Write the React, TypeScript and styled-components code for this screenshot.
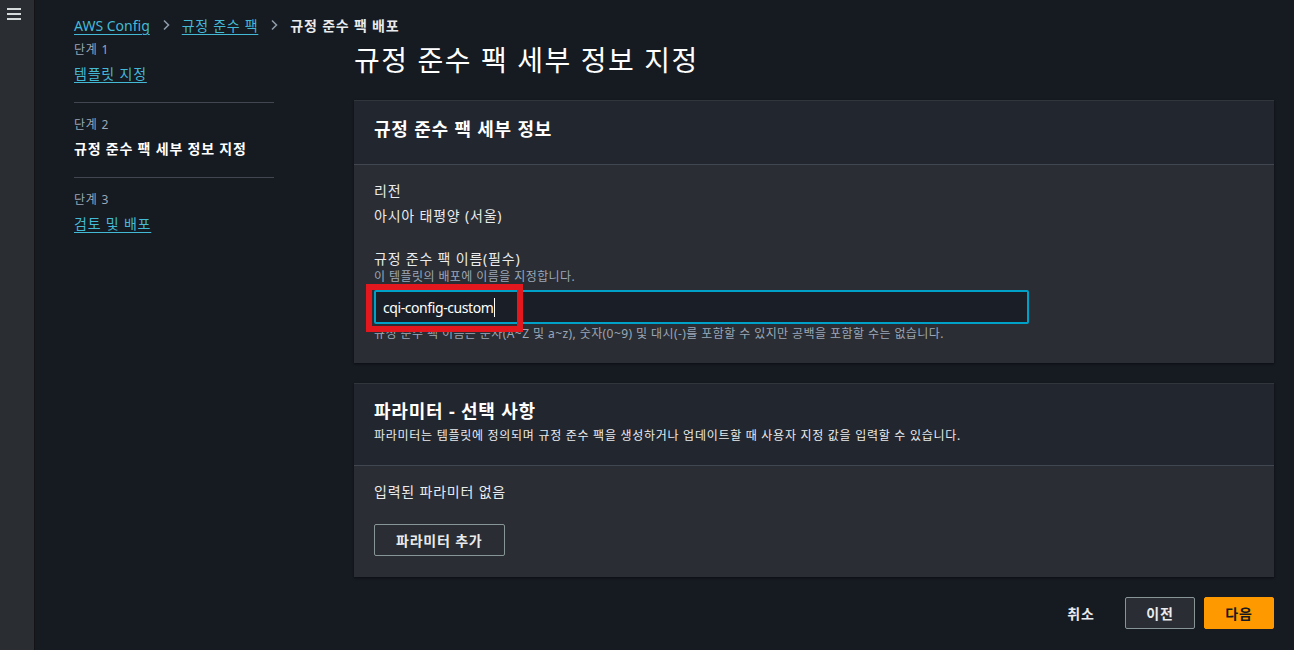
import React from "react";
import styled, { createGlobalStyle } from "styled-components";

const Global = createGlobalStyle`
  html, body, #root { margin: 0; padding: 0; height: 100%; }
  body {
    background: #161a21;
    font-family: "Noto Sans", "Noto Sans CJK KR", sans-serif;
    color: #e9ebed;
    letter-spacing: 0.05em;
    -webkit-font-smoothing: antialiased;
  }
  button { letter-spacing: inherit; }
  * { box-sizing: border-box; }
`;

const Shell = styled.div`
  display: flex;
  min-height: 100vh;
`;

const SideRail = styled.aside`
  width: 35px;
  flex: none;
  background: #2a2e33;
  border-right: 1px solid #121418;
  padding: 8px 0 0 7px;
`;

const MenuButton = styled.button`
  display: flex;
  flex-direction: column;
  gap: 3px;
  width: 14px;
  padding: 0;
  border: 0;
  background: none;
  cursor: pointer;
  span {
    display: block;
    height: 2px;
    background: #d5dbdb;
  }
`;

const Main = styled.main`
  flex: 1;
  padding: 14px 20px 20px 39px;
`;

const Breadcrumbs = styled.nav`
  display: flex;
  align-items: center;
  height: 22px;
  font-size: 14px;
  gap: 10px;
`;

const Crumb = styled.a<{ $latin?: boolean }>`
  color: #44b9d6;
  text-decoration: underline;
  text-underline-offset: 3px;
  text-decoration-thickness: 1px;
  letter-spacing: ${(p) => (p.$latin ? "0" : "0.05em")};
`;

const CrumbCurrent = styled.span`
  color: #e9ebed;
  font-weight: 700;
`;

const Chevron = styled.svg`
  width: 12px;
  height: 12px;
  color: #8d99a8;
`;

const Body = styled.div`
  display: grid;
  grid-template-columns: 200px 1fr;
  column-gap: 80px;
  margin-top: 6px;
`;

const Steps = styled.ol`
  list-style: none;
  margin: 0;
  padding: 0;
`;

const Step = styled.li`
  display: flex;
  flex-direction: column;
  gap: 6px;
  padding: 14px 0 18px;
  border-bottom: 1px solid #414750;
  &:first-child { padding-top: 0; }
  &:last-child { border-bottom: 0; }
`;

const StepLabel = styled.span`
  font-size: 12px;
  line-height: 16px;
  color: #9ba7b6;
`;

const StepLink = styled.a`
  font-size: 14px;
  line-height: 20px;
  color: #44b9d6;
  text-decoration: underline;
  text-underline-offset: 3px;
  align-self: flex-start;
`;

const StepCurrent = styled.span`
  font-size: 14px;
  line-height: 20px;
  font-weight: 700;
  color: #ffffff;
`;

const Column = styled.div`
  display: flex;
  flex-direction: column;
`;

const PageTitle = styled.h1`
  margin: 0 0 22px;
  font-size: 28px;
  line-height: 36px;
  font-weight: 400;
  letter-spacing: 0.056em;
  color: #ffffff;
`;

const Panel = styled.section`
  background: #2a2d33;
  box-shadow: 0 1px 2px rgba(0, 0, 0, 0.5);
  margin-bottom: 20px;
`;

const PanelHeader = styled.header<{ $tight?: boolean }>`
  background: #22262e;
  border-top: 1px solid #31353c;
  border-bottom: 1px solid #414750;
  padding: ${(p) => (p.$tight ? "15px 20px 21px" : "16px 20px 23px")};
`;

const PanelTitle = styled.h2`
  margin: 0;
  font-size: 18px;
  line-height: 24px;
  font-weight: 700;
  color: #ffffff;
`;

const PanelDesc = styled.p`
  margin: 5px 0 0;
  font-size: 12px;
  line-height: 16px;
  letter-spacing: 0.06em;
  color: #e9ebed;
`;

const PanelBody = styled.div`
  padding: 16px 20px 21px;
  display: flex;
  flex-direction: column;
`;

const FieldLabel = styled.div`
  font-size: 14px;
  line-height: 20px;
  color: #e9ebed;
`;

const FieldValue = styled.div`
  font-size: 14px;
  line-height: 20px;
  color: #e9ebed;
  margin-top: 5px;
  margin-bottom: 23px;
`;

const FieldDesc = styled.div`
  font-size: 12px;
  line-height: 16px;
  letter-spacing: 0.035em;
  color: #9ba7b6;
`;

const InputWrap = styled.div`
  position: relative;
  width: 655px;
  margin: 5px 0 2px;
`;

const TextBox = styled.div`
  height: 34px;
  border: 2px solid #00a1c9;
  border-radius: 2px;
  background: #1a1f27;
  padding: 0 7px;
  display: flex;
  align-items: center;
  font-size: 14px;
  letter-spacing: -0.03em;
  color: #ffffff;
`;

const Caret = styled.span`
  display: inline-block;
  width: 1px;
  height: 19px;
  background: #ffffff;
  margin-left: 1px;
`;

const Annotation = styled.div`
  position: absolute;
  left: -8px;
  top: -6px;
  width: 157px;
  height: 48px;
  border: 6px solid #e3171e;
  pointer-events: none;
`;

const EmptyText = styled.div`
  font-size: 14px;
  line-height: 20px;
  color: #e9ebed;
  margin-bottom: 22px;
`;

const NormalButton = styled.button`
  align-self: flex-start;
  height: 32px;
  padding: 0 21px;
  border: 1px solid #879596;
  border-radius: 2px;
  background: #2a2d33;
  color: #e9ebed;
  font-family: inherit;
  font-size: 14px;
  font-weight: 700;
  cursor: pointer;
`;

const Actions = styled.div`
  display: flex;
  justify-content: flex-end;
  gap: 9px;
`;

const ActionButton = styled.button<{ $kind: "link" | "normal" | "primary" }>`
  height: 32px;
  min-width: 70px;
  padding: 0 20px;
  border-radius: 2px;
  font-family: inherit;
  font-size: 14px;
  font-weight: 700;
  cursor: pointer;
  border: 1px solid
    ${(p) => (p.$kind === "normal" ? "#879596" : p.$kind === "primary" ? "#ff9900" : "transparent")};
  background: ${(p) => (p.$kind === "primary" ? "#ff9900" : p.$kind === "normal" ? "#2a2d33" : "transparent")};
  color: ${(p) => (p.$kind === "primary" ? "#16191f" : "#e9ebed")};
`;

const ChevronIcon = () => (
  <Chevron viewBox="0 0 12 12" fill="none">
    <path d="M4 1.5 8.5 6 4 10.5" stroke="currentColor" strokeWidth="1.6" />
  </Chevron>
);

export default function App() {
  return (
    <>
      <Global />
      <Shell>
        <SideRail>
          <MenuButton aria-label="메뉴">
            <span />
            <span />
            <span />
          </MenuButton>
        </SideRail>
        <Main>
          <Breadcrumbs>
            <Crumb href="#" $latin>
              AWS Config
            </Crumb>
            <ChevronIcon />
            <Crumb href="#">규정 준수 팩</Crumb>
            <ChevronIcon />
            <CrumbCurrent>규정 준수 팩 배포</CrumbCurrent>
          </Breadcrumbs>
          <Body>
            <Steps>
              <Step>
                <StepLabel>단계 1</StepLabel>
                <StepLink href="#">템플릿 지정</StepLink>
              </Step>
              <Step>
                <StepLabel>단계 2</StepLabel>
                <StepCurrent>규정 준수 팩 세부 정보 지정</StepCurrent>
              </Step>
              <Step>
                <StepLabel>단계 3</StepLabel>
                <StepLink href="#">검토 및 배포</StepLink>
              </Step>
            </Steps>
            <Column>
              <PageTitle>규정 준수 팩 세부 정보 지정</PageTitle>
              <Panel>
                <PanelHeader>
                  <PanelTitle>규정 준수 팩 세부 정보</PanelTitle>
                </PanelHeader>
                <PanelBody>
                  <FieldLabel>리전</FieldLabel>
                  <FieldValue>아시아 태평양 (서울)</FieldValue>
                  <FieldLabel>규정 준수 팩 이름(필수)</FieldLabel>
                  <FieldDesc>이 템플릿의 배포에 이름을 지정합니다.</FieldDesc>
                  <InputWrap>
                    <TextBox>
                      cqi-config-custom
                      <Caret />
                    </TextBox>
                    <Annotation />
                  </InputWrap>
                  <FieldDesc>
                    규정 준수 팩 이름은 문자(A~Z 및 a~z), 숫자(0~9) 및 대시(-)를 포함할 수 있지만 공백을 포함할 수는 없습니다.
                  </FieldDesc>
                </PanelBody>
              </Panel>
              <Panel>
                <PanelHeader $tight>
                  <PanelTitle>파라미터 - 선택 사항</PanelTitle>
                  <PanelDesc>
                    파라미터는 템플릿에 정의되며 규정 준수 팩을 생성하거나 업데이트할 때 사용자 지정 값을 입력할 수 있습니다.
                  </PanelDesc>
                </PanelHeader>
                <PanelBody>
                  <EmptyText>입력된 파라미터 없음</EmptyText>
                  <NormalButton>파라미터 추가</NormalButton>
                </PanelBody>
              </Panel>
              <Actions>
                <ActionButton $kind="link">취소</ActionButton>
                <ActionButton $kind="normal">이전</ActionButton>
                <ActionButton $kind="primary">다음</ActionButton>
              </Actions>
            </Column>
          </Body>
        </Main>
      </Shell>
    </>
  );
}
